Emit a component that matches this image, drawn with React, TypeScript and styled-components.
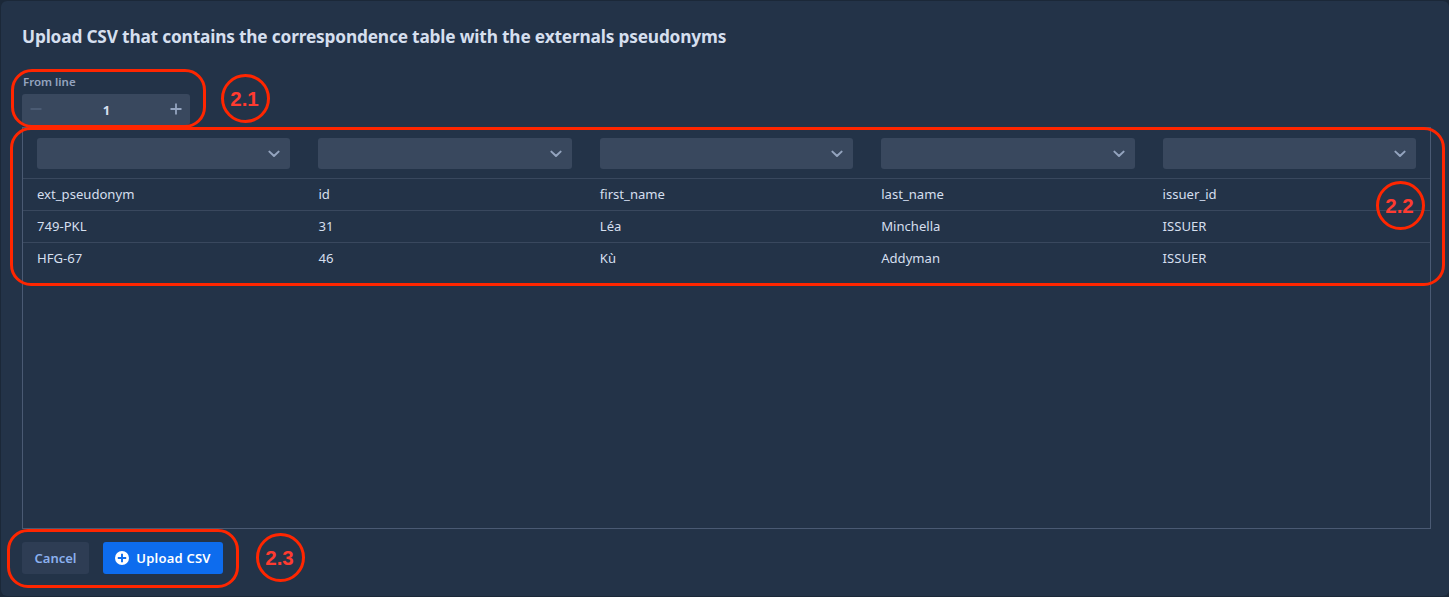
import React from 'react';
import styled, { createGlobalStyle } from 'styled-components';

const GlobalStyle = createGlobalStyle`
  * { box-sizing: border-box; }
  body {
    margin: 0;
    background: #1b2838;
    font-family: 'Noto Sans', 'Open Sans', sans-serif;
    overflow: hidden;
  }
`;

const Page = styled.main`
  position: relative;
  width: 1449px;
  height: 597px;
  padding: 1px 0 1px 1px;
`;

const Dialog = styled.section`
  display: flex;
  flex-direction: column;
  height: 595px;
  padding: 24px 18px 0 21px;
  background: #233348;
  border-radius: 6px;
`;

const Title = styled.h1`
  margin: 0;
  height: 24px;
  line-height: 24px;
  font-size: 17.3px;
  font-weight: 700;
  letter-spacing: -0.18px;
  color: #d5dfee;
  white-space: nowrap;
`;

const FieldLabel = styled.label`
  margin-top: 24px;
  height: 21px;
  padding-left: 1px;
  line-height: 17px;
  font-size: 11.5px;
  font-weight: 600;
  color: #94a4bf;
`;

const Stepper = styled.div`
  display: flex;
  align-items: center;
  justify-content: space-between;
  width: 168px;
  height: 31px;
  padding: 0 8px;
  background: #39485e;
  border-radius: 3px;
`;

const StepButton = styled.button<{ $dim?: boolean }>`
  display: flex;
  padding: 0 0 1px;
  border: 0;
  background: none;
  color: ${(p) => (p.$dim ? '#52627b' : '#94a4bf')};
`;

const StepValue = styled.span`
  padding: 1px 0 0 1px;
  font-size: 13px;
  line-height: 30px;
  font-weight: 700;
  color: #d5dfee;
`;

const Table = styled.div`
  margin-top: 2px;
  height: 402px;
  border: 1px solid #4a5a73;
`;

const Row = styled.div<{ $head?: boolean; $last?: boolean }>`
  display: grid;
  grid-template-columns: repeat(5, 1fr);
  align-items: start;
  height: ${(p) => (p.$head ? 51 : 32)}px;
  padding-top: ${(p) => (p.$head ? 10 : 5)}px;
  border-bottom: 1px solid ${(p) => (p.$last ? 'transparent' : '#39485e')};
`;

const Cell = styled.div`
  padding: 0 14px;
  font-size: 13.1px;
  line-height: 20px;
  color: #d5dfee;
`;

const Select = styled.div`
  display: flex;
  align-items: center;
  justify-content: flex-end;
  height: 31px;
  padding-right: 10px;
  background: #39485e;
  border-radius: 3px;
  color: #94a4bf;
`;

const Actions = styled.footer`
  display: flex;
  gap: 14px;
  margin-top: 13px;
`;

const Button = styled.button<{ $primary?: boolean }>`
  display: flex;
  align-items: center;
  justify-content: center;
  gap: 7px;
  width: ${(p) => (p.$primary ? 120 : 67)}px;
  height: 32px;
  padding: 0;
  border: 0;
  border-radius: 3px;
  font-family: inherit;
  font-size: 13px;
  font-weight: 600;
  letter-spacing: ${(p) => (p.$primary ? 0.2 : 0)}px;
  white-space: nowrap;
  color: ${(p) => (p.$primary ? '#ffffff' : '#8bb0ee')};
  background: ${(p) => (p.$primary ? '#0d6cee' : '#2e3d54')};
`;

const Outline = styled.div<{ $x: number; $y: number; $w: number; $h: number }>`
  position: absolute;
  left: ${(p) => p.$x}px;
  top: ${(p) => p.$y}px;
  width: ${(p) => p.$w}px;
  height: ${(p) => p.$h}px;
  border: 3px solid #ff2600;
  border-radius: 21px;
  pointer-events: none;
`;

const Marker = styled.div<{ $x: number; $y: number }>`
  position: absolute;
  left: ${(p) => p.$x}px;
  top: ${(p) => p.$y}px;
  display: flex;
  align-items: center;
  justify-content: center;
  width: 49px;
  height: 49px;
  padding-right: 2px;
  border: 3px solid #ff2600;
  border-radius: 50%;
  color: #ff3b30;
  font: 700 20.5px/20px 'Liberation Sans', sans-serif;
`;

const rows = [
  ['ext_pseudonym', 'id', 'first_name', 'last_name', 'issuer_id'],
  ['749-PKL', '31', 'Léa', 'Minchella', 'ISSUER'],
  ['HFG-67', '46', 'Kù', 'Addyman', 'ISSUER'],
];

const Chevron = () => (
  <svg width="12" height="8" viewBox="0 0 12 8" fill="none" stroke="currentColor" strokeWidth="2" strokeLinecap="round" strokeLinejoin="round">
    <path d="M1.4 1.6 6 6l4.6-4.4" />
  </svg>
);

export default function App() {
  return (
    <Page>
      <GlobalStyle />
      <Dialog>
        <Title>Upload CSV that contains the correspondence table with the externals pseudonyms</Title>
        <FieldLabel>From line</FieldLabel>
        <Stepper>
          <StepButton $dim aria-label="Decrease">
            <svg width="12" height="12" viewBox="0 0 12 12" stroke="currentColor" strokeWidth="1.5">
              <path d="M.5 6h11" />
            </svg>
          </StepButton>
          <StepValue>1</StepValue>
          <StepButton aria-label="Increase">
            <svg width="12" height="12" viewBox="0 0 12 12" stroke="currentColor" strokeWidth="1.8">
              <path d="M.5 6h11M6 .5v11" />
            </svg>
          </StepButton>
        </Stepper>
        <Table>
          <Row $head>
            {rows[0].map((name) => (
              <Cell key={name}>
                <Select>
                  <Chevron />
                </Select>
              </Cell>
            ))}
          </Row>
          {rows.map((row, i) => (
            <Row key={row[0]} $last={i === rows.length - 1}>
              {row.map((text, j) => (
                <Cell key={j}>{text}</Cell>
              ))}
            </Row>
          ))}
        </Table>
        <Actions>
          <Button>Cancel</Button>
          <Button $primary>
            <svg width="14" height="14" viewBox="0 0 14 14">
              <circle cx="7" cy="7" r="7" fill="#fff" />
              <path d="M7 2.8v8.4M2.8 7h8.4" stroke="#0d6cee" strokeWidth="1.9" />
            </svg>
            Upload CSV
          </Button>
        </Actions>
      </Dialog>
      <Outline $x={11} $y={69} $w={195} $h={59} />
      <Outline $x={10} $y={127} $w={1435} $h={159} />
      <Outline $x={7} $y={529} $w={232} $h={59} />
      <Marker $x={221} $y={74}>2.1</Marker>
      <Marker $x={1376} $y={181}>2.2</Marker>
      <Marker $x={256} $y={533}>2.3</Marker>
    </Page>
  );
}
